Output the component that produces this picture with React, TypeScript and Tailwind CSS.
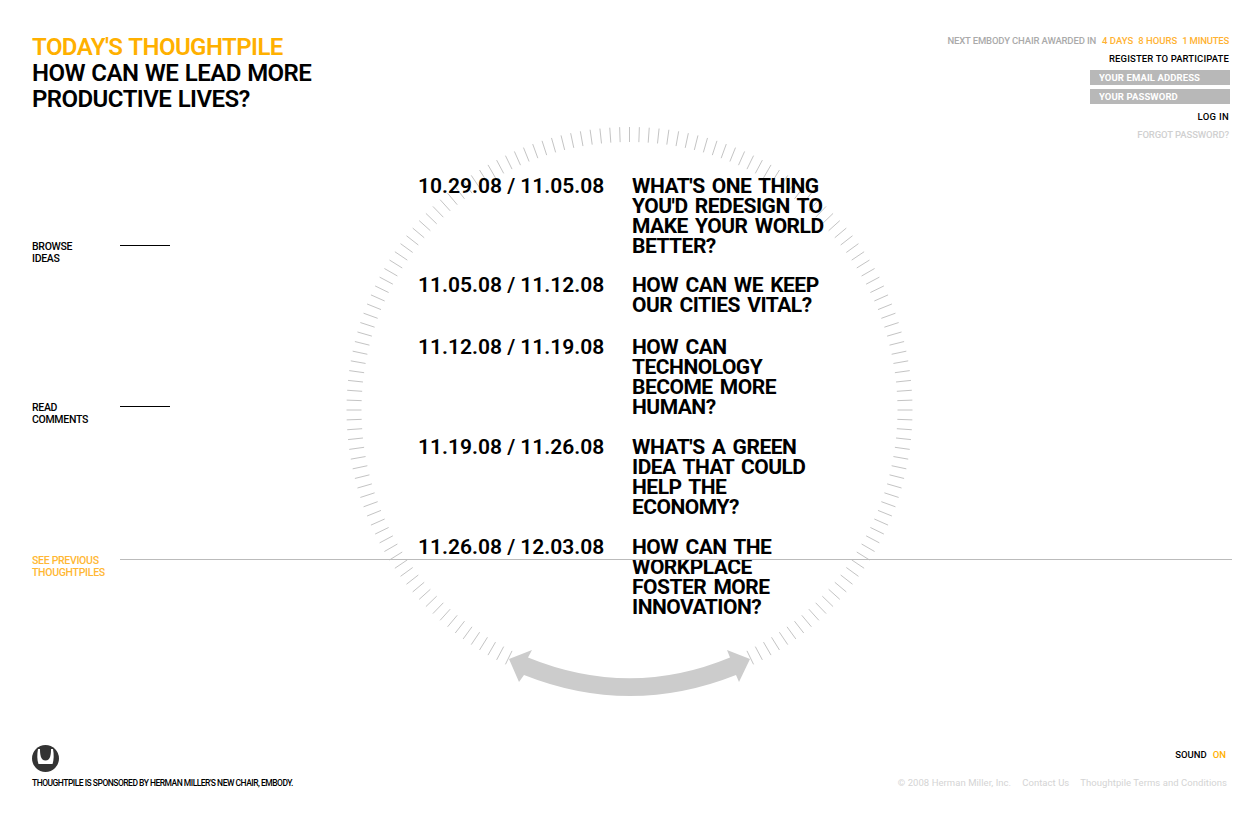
const ticks: number[] = [];
for (let a = 0; a < 360; a += 2) {
  const fromBottom = Math.abs(a - 180);
  if (fromBottom >= 26) ticks.push(a);
}

const rows = [
  { cls: "mt-0", date: "10.29.08 / 11.05.08", lines: ["WHAT'S ONE THING", "YOU'D REDESIGN TO", "MAKE YOUR WORLD", "BETTER?"] },
  { cls: "mt-[19px]", date: "11.05.08 / 11.12.08", lines: ["HOW CAN WE KEEP", "OUR CITIES VITAL?"] },
  { cls: "mt-[22px]", date: "11.12.08 / 11.19.08", lines: ["HOW CAN", "TECHNOLOGY", "BECOME MORE", "HUMAN?"] },
  { cls: "mt-[20px]", date: "11.19.08 / 11.26.08", lines: ["WHAT'S A GREEN", "IDEA THAT COULD", "HELP THE", "ECONOMY?"] },
  { cls: "mt-[20px]", date: "11.26.08 / 12.03.08", lines: ["HOW CAN THE", "WORKPLACE", "FOSTER MORE", "INNOVATION?"] },
];

function Ring() {
  return (
    <svg className="absolute left-0 top-0 pointer-events-none" width="1259" height="821" viewBox="0 0 1259 821" fill="none">
      {ticks.map((a) => {
        const r = (a * Math.PI) / 180;
        const cx = 629.5, cy = 410;
        return (
          <line
            key={a}
            x1={cx + Math.sin(r) * 268}
            y1={cy - Math.cos(r) * 268}
            x2={cx + Math.sin(r) * 283}
            y2={cy - Math.cos(r) * 283}
            stroke="#c4c4c4"
            strokeWidth="1"
          />
        );
      })}
      <path
        d="M509 659 L532 650 L528 657.5 Q630 699 730 657.5 L727 650 L750 659 L739 682 L736 675 Q630 717 524 675 L519 682 Z"
        fill="#cccccc"
      />
    </svg>
  );
}

function Logo() {
  return (
    <svg width="27" height="27" viewBox="0 0 27 27">
      <circle cx="13.5" cy="13.5" r="13.5" fill="#333333" />
      <path d="M6 4 L8 4 C8 9 8.5 15.5 13.5 15.5 C18.5 15.5 19 9 19 4 L21 4 C22 9 22 15 20.5 19 L6.5 19 C5 15 5 9 6 4 Z" fill="#ffffff" />
    </svg>
  );
}

function NavItem({ a, b, cls, color = "text-black", line = "w-[50px] bg-black" }: { a: string; b: string; cls: string; color?: string; line?: string }) {
  return (
    <div className={`relative h-[24px] ${cls}`}>
      <div className={`pt-px text-[10.5px] leading-[12px] font-medium tracking-[-0.3px] ${color}`}>
        {a}
        <br />
        {b}
      </div>
      <div className={`absolute left-[88px] top-[5px] h-px ${line}`} />
    </div>
  );
}

export default function App() {
  return (
    <div className="relative h-[821px] w-[1259px] overflow-hidden bg-white font-['Roboto',sans-serif]">
      <Ring />
      <div className="relative flex h-[176px] justify-between pl-[32px] pr-[30px] pt-[34px]">
        <h1 className="text-[24px] leading-[26px] font-semibold tracking-[-0.55px] text-black [word-spacing:1px]">
          <span className="text-[#ffb000]">TODAY'S THOUGHTPILE</span>
          <br />
          HOW CAN WE LEAD MORE
          <br />
          PRODUCTIVE LIVES?
        </h1>
        <div className="-mt-[1px] flex flex-col items-end text-[9.5px] font-medium">
          <div className="flex h-[16px] items-center gap-[5px] text-[#ffb232]">
            <span className="text-[#aaaaaa] mr-[1px] tracking-[-0.15px]">NEXT EMBODY CHAIR AWARDED IN</span>
            <span>4 DAYS</span>
            <span>8 HOURS</span>
            <span className="tracking-[-0.2px]">1 MINUTES</span>
          </div>
          <div className="mt-[2px] h-[16px] leading-[16px] tracking-[0.13px] text-black">REGISTER TO PARTICIPATE</div>
          <input
            readOnly
            placeholder="YOUR EMAIL ADDRESS"
            className="-mr-[1px] mt-[3px] h-[15px] w-[140px] bg-[#b8b8b8] pl-[9px] text-[9.5px] font-bold tracking-[0.1px] outline-none placeholder:text-white placeholder:opacity-100"
          />
          <input
            readOnly
            placeholder="YOUR PASSWORD"
            className="-mr-[1px] mt-[4px] h-[15px] w-[140px] bg-[#b8b8b8] pl-[9px] text-[9.5px] font-bold tracking-[0.1px] outline-none placeholder:text-white placeholder:opacity-100"
          />
          <div className="mt-[5px] h-[16px] leading-[16px] tracking-[0.3px] text-black">LOG IN</div>
          <div className="mt-[2px] h-[16px] leading-[16px] tracking-[-0.1px] text-[#d0d0d0]">FORGOT PASSWORD?</div>
        </div>
      </div>

      <div className="relative flex h-[554px]">
        <div className="w-[418px] pl-[32px]">
          <NavItem a="BROWSE" b="IDEAS" cls="mt-[64px]" />
          <NavItem a="READ" b="COMMENTS" cls="mt-[137px]" />
          <NavItem a="SEE PREVIOUS" b="THOUGHTPILES" cls="mt-[129px]" color="text-[#ffb733]" line="w-[1112px] bg-[#bbbbbb]" />
        </div>
        <div className="flex flex-col text-[21px] leading-[20px] font-bold text-black">
          {rows.map((r) => (
            <div key={r.date} className={`flex ${r.cls}`}>
              <div className="w-[214px] font-semibold">{r.date}</div>
              <div className="tracking-[-0.5px] [word-spacing:2.5px]">
                {r.lines.map((l) => (
                  <div key={l}>{l}</div>
                ))}
              </div>
            </div>
          ))}
        </div>
      </div>

      <div className="relative flex justify-between pl-[32px] pr-[32px] pt-[15px]">
        <div>
          <Logo />
          <div className="mt-[5px] pt-px text-[8.5px] leading-[10px] font-medium tracking-[-0.51px] text-black">THOUGHTPILE IS SPONSORED BY HERMAN MILLER'S NEW CHAIR, EMBODY.</div>
        </div>
        <div className="flex flex-col items-end">
          <div className="mr-[1px] mt-[4px] flex gap-[6px] text-[9.5px] leading-[12px] font-medium">
            <span className="text-black">SOUND</span>
            <span className="text-[#ffb000]">ON</span>
          </div>
          <div className="mt-[16px] flex gap-[11px] text-[9.5px] leading-[12px] tracking-[0.05px] text-[#d4d4d4]">
            <span>© 2008 Herman Miller, Inc.</span>
            <span>Contact Us</span>
            <span>Thoughtpile Terms and Conditions</span>
          </div>
        </div>
      </div>
    </div>
  );
}
